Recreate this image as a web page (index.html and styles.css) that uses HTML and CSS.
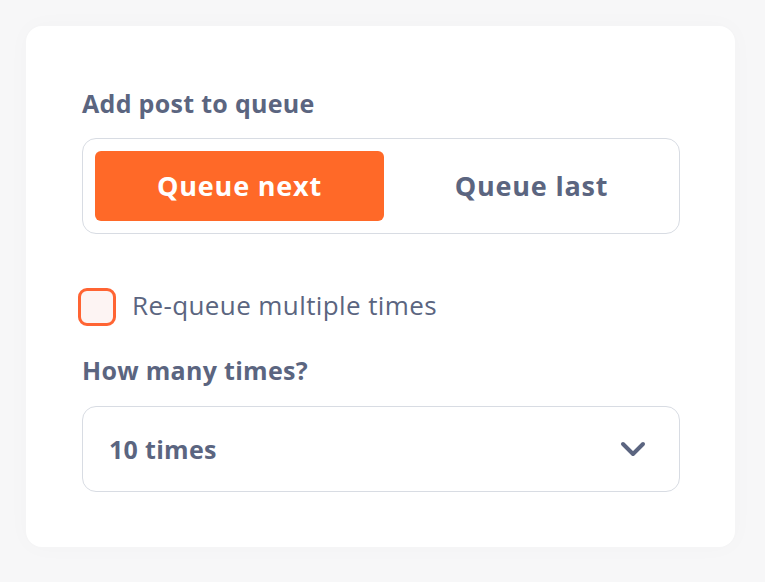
FILE: index.html
```html
<!DOCTYPE html>
<html>
<head>
<meta charset="utf-8">
<link rel="stylesheet" href="styles.css">
</head>
<body>
<div class="card">
  <div class="label">Add post to queue</div>
  <div class="toggle">
    <button class="opt active">Queue next</button>
    <button class="opt last">Queue last</button>
  </div>
  <label class="check">
    <span class="box"></span>
    <span class="check-text">Re-queue multiple times</span>
  </label>
  <div class="label label2">How many times?</div>
  <div class="select">
    <span class="select-value">10 times</span>
    <svg class="chev" width="26" height="16" viewBox="0 0 26 16"><path d="M3 3 L13 13 L23 3" fill="none" stroke="#5b6580" stroke-width="4" stroke-linecap="round" stroke-linejoin="round"/></svg>
  </div>
</div>
</body>
</html>
```
FILE: styles.css
```css
html, body { margin: 0; padding: 0; }
body {
  background: #f7f7f8;
  width: 765px;
  height: 582px;
  font-family: "Open Sans", "Lato", sans-serif;
  color: #5b6580;
  padding: 26px;
  box-sizing: border-box;
}
.card {
  width: 709px;
  height: 521px;
  background: #fff;
  border-radius: 16px;
  box-shadow: 0 0 24px rgba(0,0,0,0.025);
  box-sizing: border-box;
  padding: 62px 55px 0 56px;
}
.label {
  font-size: 25px;
  font-weight: 700;
  line-height: 30px;
  letter-spacing: 0.3px;
}
.toggle {
  margin-top: 20px;
  height: 96px;
  border: 1.5px solid #d8dce3;
  border-radius: 14px;
  box-sizing: border-box;
  padding: 12px;
  display: grid;
  grid-template-columns: 289px 1fr;
}
.opt {
  border: 0;
  background: transparent;
  font-family: inherit;
  font-size: 27px;
  font-weight: 700;
  color: #5b6580;
  border-radius: 6px;
  padding: 0 0 1px;
  letter-spacing: 0.8px;
}
.opt.last { padding-left: 12px; }
.opt.active {
  background: #ff6928;
  color: #fff;
}
.check {
  display: flex;
  align-items: center;
  margin-top: 53px;
  margin-left: -4px;
}
.box {
  width: 38px;
  height: 38px;
  box-sizing: border-box;
  border: 3px solid #ff6433;
  border-radius: 9px;
  background: #fdf4f3;
}
.check-text {
  margin-left: 16px;
  font-size: 26px;
  font-weight: 400;
  letter-spacing: 0.4px;
  padding-bottom: 3px;
}
.label2 { margin-top: 29px; }
.select {
  margin-top: 21px;
  height: 86px;
  border: 1.5px solid #d8dce3;
  border-radius: 14px;
  box-sizing: border-box;
  display: flex;
  align-items: center;
  justify-content: space-between;
  padding: 0 33px 0 26px;
}
.select-value {
  font-size: 25px;
  font-weight: 700;
  letter-spacing: 0.3px;
}
.chev { display: block; }
```
